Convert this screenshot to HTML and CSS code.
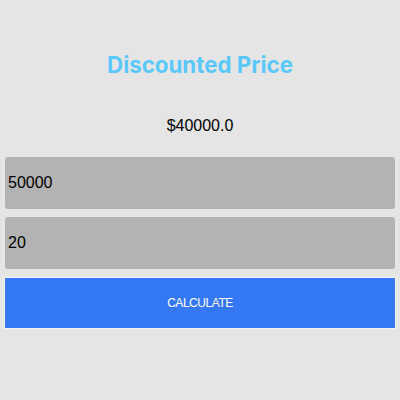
FILE: index.html
```html
<!DOCTYPE html>
<html>
<head>
<meta charset="utf-8">
<link rel="stylesheet" href="styles.css">
</head>
<body>
<div class="app">
  <h1 class="title">Discounted Price</h1>
  <div class="result">$40000.0</div>
  <div class="field">50000</div>
  <div class="field">20</div>
  <div class="button">CALCULATE</div>
</div>
</body>
</html>
```
FILE: styles.css
```css
html, body {
  margin: 0;
  padding: 0;
  background: #e5e5e5;
  width: 400px;
  height: 400px;
}
.app {
  display: flex;
  flex-direction: column;
  padding: 49px 5px 0 5px;
  font-family: "Liberation Sans", Arial, sans-serif;
}
.title {
  margin: 0;
  text-align: center;
  font-family: Inter, "Liberation Sans", sans-serif;
  font-weight: 700;
  font-size: 22.3px;
  line-height: 32px;
  color: #5ac8fa;
}
.result {
  margin-top: 35px;
  text-align: center;
  font-size: 16px;
  line-height: 20px;
  color: #000;
}
.field {
  margin-top: 21px;
  height: 52px;
  display: flex;
  align-items: center;
  padding-left: 3px;
  background: #b3b3b3;
  border-radius: 3px;
  font-size: 16px;
  color: #000;
}
.field + .field {
  margin-top: 8px;
}
.button {
  margin: 8px -1px 0 -1px;
  height: 50px;
  border: 1px solid #f4f4f4;
  background: #3478f6;
  color: #fff;
  display: flex;
  align-items: center;
  justify-content: center;
  font-size: 12px;
  letter-spacing: -0.45px;
}
```
